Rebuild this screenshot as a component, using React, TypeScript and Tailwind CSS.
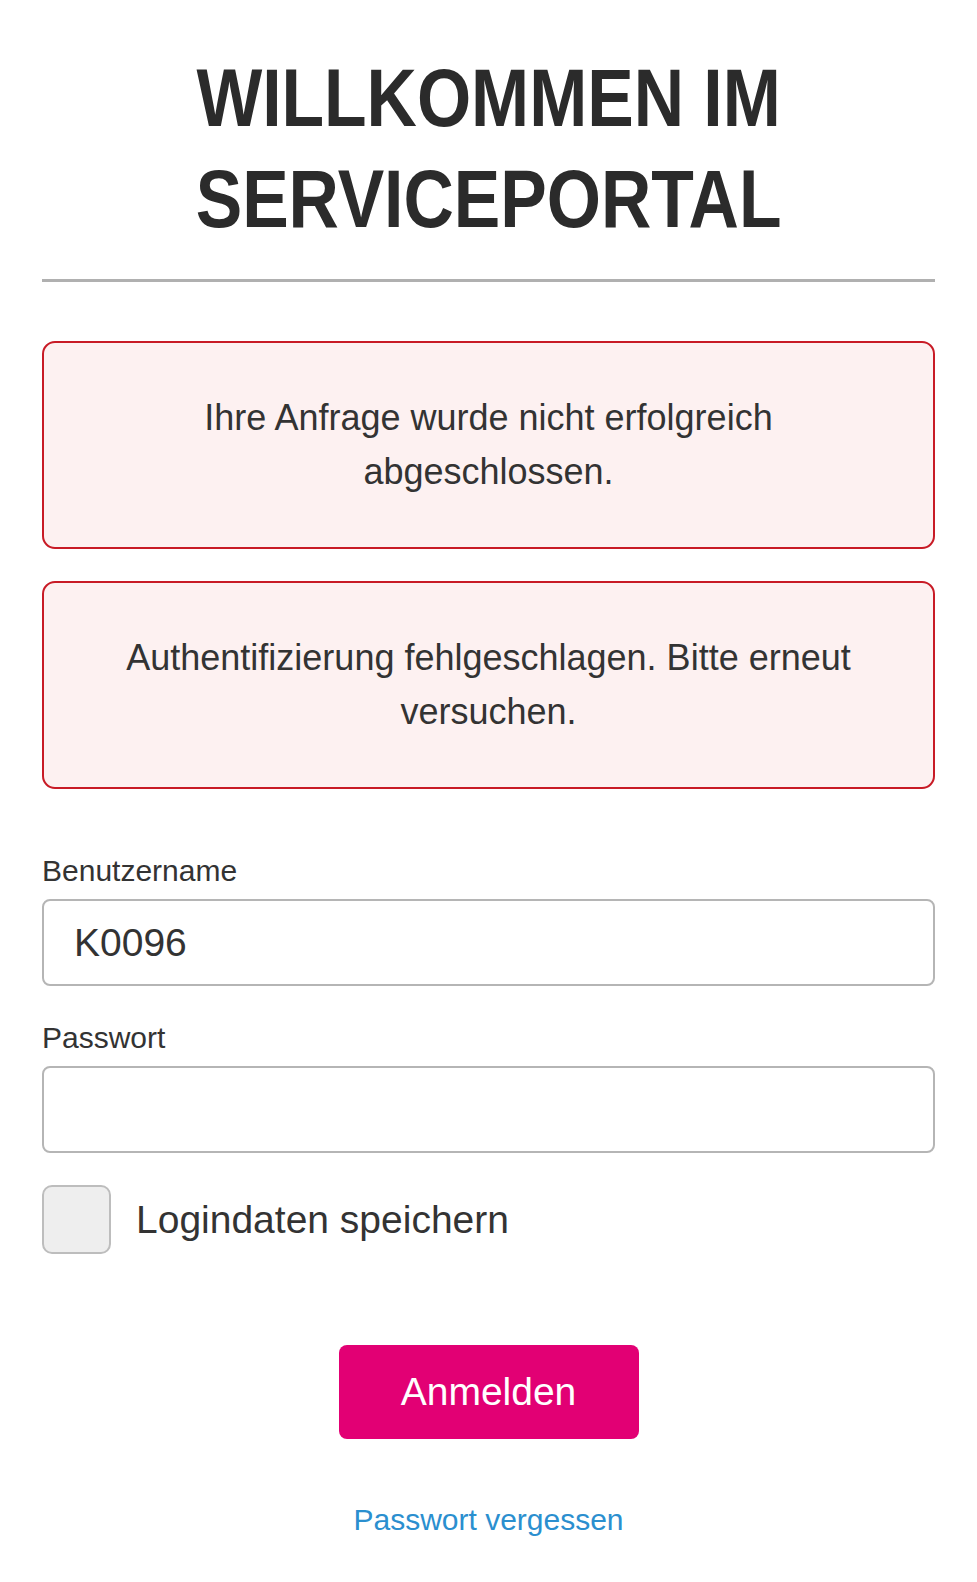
import React from "react";

const font = { fontFamily: '"Liberation Sans", Arial, sans-serif' };

function Alert({ children }: { children: React.ReactNode }) {
  return (
    <div className="rounded-[13px] border-[2.5px] border-[#c81b26] bg-[#fdf1f1] px-[60px] py-[48px] text-center text-[36px] leading-[54px] text-[#333]">
      {children}
    </div>
  );
}

export default function App() {
  return (
    <div className="min-h-screen bg-white px-[42px] pt-[48px] pb-[40px] text-[#333]" style={font}>
      <h1 className="text-center">
        <span className="inline-block scale-x-[0.86] text-[81px] font-bold leading-[101px] text-[#2b2b2b]">
          WILLKOMMEN IM
          <br />
          SERVICEPORTAL
        </span>
      </h1>

      <div className="mt-[29px] h-[3px] bg-[#b0b0b0]" />

      <div className="mt-[59px] flex flex-col gap-[32px]">
        <Alert>Ihre Anfrage wurde nicht erfolgreich abgeschlossen.</Alert>
        <Alert>Authentifizierung fehlgeschlagen. Bitte erneut versuchen.</Alert>
      </div>

      <form className="mt-[64px]" onSubmit={(e) => e.preventDefault()}>
        <label className="block text-[30px] leading-[36px] text-[#333]">Benutzername</label>
        <input
          defaultValue="K0096"
          className="mt-[10px] block h-[87px] w-full rounded-[8px] border-2 border-[#b5b5b5] bg-white px-[30px] text-[39px] text-[#333] outline-none"
          style={font}
        />

        <label className="mt-[34px] block text-[30px] leading-[36px] text-[#333]">Passwort</label>
        <input
          type="password"
          className="mt-[10px] block h-[87px] w-full rounded-[8px] border-2 border-[#b5b5b5] bg-white px-[30px] text-[39px] outline-none"
        />

        <label className="mt-[32px] flex items-center gap-[25px]">
          <input
            type="checkbox"
            className="h-[69px] w-[69px] shrink-0 appearance-none rounded-[10px] border-2 border-[#bdbdbd] bg-[#eeeeee]"
          />
          <span className="text-[39px] leading-[48px] text-[#333]">Logindaten speichern</span>
        </label>

        <div className="mt-[91px] flex justify-center">
          <button
            type="submit"
            className="h-[94px] w-[300px] rounded-[8px] bg-[#e20074] text-[39px] text-white"
            style={font}
          >
            Anmelden
          </button>
        </div>

        <div className="mt-[63px] text-center">
          <a href="#" className="text-[30px] leading-[36px] text-[#2b8fcf]">
            Passwort vergessen
          </a>
        </div>
      </form>
    </div>
  );
}
